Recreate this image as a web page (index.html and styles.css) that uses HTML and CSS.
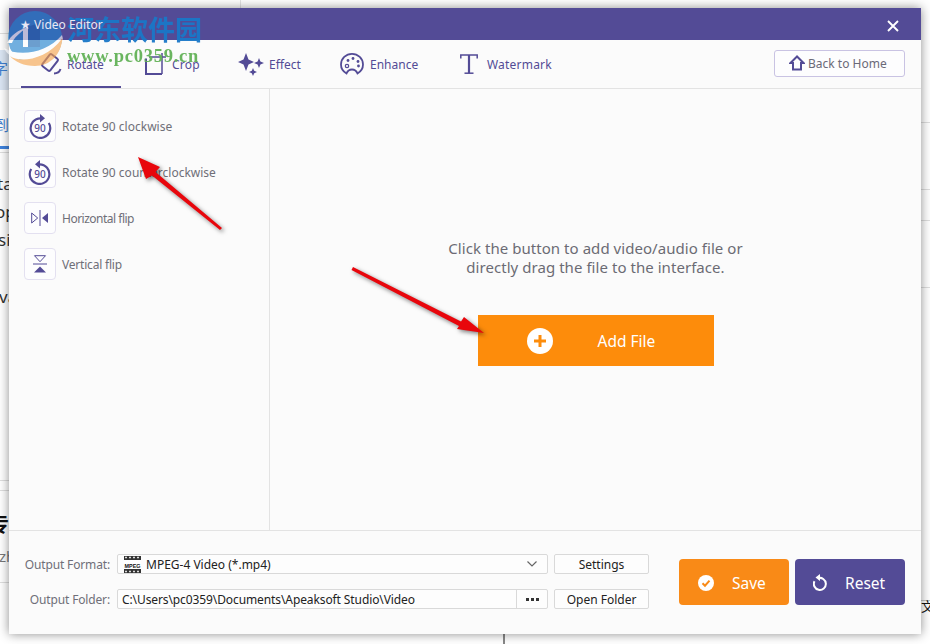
FILE: index.html
```html
<!DOCTYPE html>
<html lang="en">
<head>
<meta charset="utf-8">
<title>Video Editor</title>
<link rel="stylesheet" href="styles.css">
</head>
<body>
<div class="desktop">
  <i class="bg-line bl-a"></i><i class="bg-band"></i><i class="bg-tab"></i>
  <i class="bg-line bl-b"></i><i class="bg-line bl-e"></i><i class="bg-line bl-c"></i><i class="bg-line bl-d"></i>
  <i class="bg-line br-a"></i><i class="bg-line br-b"></i><i class="bg-line br-c"></i><i class="bg-line br-d"></i><i class="bg-line br-e"></i>
  <i class="bg-vline vl-a"></i><i class="bg-vline vl-b"></i>
  <span class="frag f-zi">字</span><span class="frag f-dao">到</span>
  <span class="frag f-t1">ta</span><span class="frag f-t2">op</span><span class="frag f-t3">si</span><span class="frag f-t4">va</span>
  <span class="frag f-zhuan">专</span><span class="frag f-zh">zh</span><span class="frag f-wen">文</span>

  <div class="window">
    <header class="titlebar">
      <span class="title">★ Video Editor</span>
      <svg class="close" viewBox="0 0 12 12" width="12" height="12"><path d="M1 1l10 10M11 1L1 11" stroke="#fff" stroke-width="1.9" fill="none"/></svg>
    </header>

    <nav class="tabs">
      <div class="tab tab-active">
        <svg class="ti" width="22" height="24" viewBox="0 0 22 24" fill="none" stroke="#534b96" stroke-width="2"><rect x="5" y="3" width="10" height="15" rx="1.5" transform="rotate(38 10 10.5)"/><path d="M14 21.5c3 0 5.500-1.500 6.500-4.500" /></svg>
        <span>Rotate</span>
      </div>
      <div class="tab">
        <svg class="ti" width="22" height="24" viewBox="0 0 22 24" fill="none" stroke="#534b96" stroke-width="2"><path d="M1 6.500V22h16"/><path d="M4 5h17" stroke-width="1.500"/><path d="M17 1v21" stroke-width="1.500"/></svg>
        <span class="wide">Crop</span>
      </div>
      <div class="tab">
        <svg class="ti" width="26" height="24" viewBox="0 0 26 24" fill="#534b96"><path d="M8 1l2.500 6.500L16 10l-5.500 2.500L8 19l-2.500-6.500L0 10l5.500-2.500z"/><path d="M21 6l1.400 3.600L26 11l-3.600 1.400L21 16l-1.400-3.600L16 11l3.600-1.400z"/><path d="M15 16l1.200 2.800L19 20l-2.800 1.200L15 24l-1.200-2.800L11 20l2.800-1.200z"/></svg>
        <span>Effect</span>
      </div>
      <div class="tab tab-en">
        <svg class="ti" width="24" height="24" viewBox="0 0 24 24" fill="none" stroke="#534b96" stroke-width="1.800"><path d="M6.500 21.500C3 19.500 1 16 1 12.500 1 6.500 6 1.800 12 1.800s11 4.700 11 10.700c0 3.500-2 7-5.500 9-1-2.500-3-4-5.500-4s-4.500 1.500-5.500 4z"/><circle cx="7" cy="14" r="1.700" stroke-width="1.200"/><circle cx="8" cy="8.500" r="1.400" fill="#534b96" stroke="none"/><circle cx="13" cy="6.500" r="1.400" fill="#534b96" stroke="none"/><circle cx="18" cy="9.500" r="1.400" fill="#534b96" stroke="none"/><circle cx="18.500" cy="14" r="1.400" fill="#534b96" stroke="none"/></svg>
        <span>Enhance</span>
      </div>
      <div class="tab tab-wm">
        <svg class="ti" width="18" height="20" viewBox="0 0 18 20" fill="none" stroke="#534b96"><path d="M.8 4.500V1h16.400v3.500" stroke-width="1.500"/><path d="M9 1v18" stroke-width="2.200"/><path d="M4.500 19.200h9" stroke-width="1.500"/></svg>
        <span class="wide">Watermark</span>
      </div>
      <button class="home">
        <svg width="16" height="16" viewBox="0 0 16 16" fill="none" stroke="#534b96" stroke-width="2"><path d="M8 1.500L1.500 8H4v6.500h8V8h2.500z" stroke-linejoin="miter"/></svg>
        Back to Home
      </button>
    </nav>

    <div class="body">
      <aside class="sidebar">
        <div class="action">
          <span class="abox"><svg width="26" height="26" viewBox="0 0 26 26" fill="none" stroke="#534b96" stroke-width="2.200"><path d="M13.500 5.300A9.800 9.800 0 1 0 21.800 10"/><path d="M13 1l5 4.300-5 4.300z" fill="#534b96" stroke="none"/><text x="13" y="18.500" text-anchor="middle" class="n90">90</text></svg></span>
          <span>Rotate 90 clockwise</span>
        </div>
        <div class="action">
          <span class="abox"><svg width="26" height="26" viewBox="0 0 26 26" fill="none" stroke="#534b96" stroke-width="2.200"><path d="M12.500 5.300A9.800 9.800 0 1 1 4.200 10"/><path d="M13 1L8 5.300l5 4.300z" fill="#534b96" stroke="none"/><text x="13" y="18.500" text-anchor="middle" class="n90">90</text></svg></span>
          <span>Rotate 90 counterclockwise</span>
        </div>
        <div class="action">
          <span class="abox"><svg width="18" height="16" viewBox="0 0 18 16"><path d="M.7 3v10l6-5z" fill="none" stroke="#534b96"/><path d="M9 0v16" stroke="#534b96"/><path d="M17 3v10l-6-5z" fill="#534b96"/></svg></span>
          <span class="tight">Horizontal flip</span>
        </div>
        <div class="action">
          <span class="abox"><svg width="14" height="18" viewBox="0 0 14 18"><path d="M1.500.7h11l-5.500 6z" fill="none" stroke="#534b96"/><path d="M0 9h14" stroke="#534b96"/><path d="M1 17.500h12l-6-6z" fill="#534b96"/></svg></span>
          <span class="tighter">Vertical flip</span>
        </div>
      </aside>
      <main class="stage">
        <p class="hint">Click the button to add video/audio file or<br>directly drag the file to the interface.</p>
        <button class="add">
          <svg class="plus" width="26" height="26" viewBox="0 0 26 26"><circle cx="13" cy="13" r="13" fill="#fff"/><path d="M13 7v12M7 13h12" stroke="#fd8c0b" stroke-width="3"/></svg>
          <span>Add File</span>
        </button>
      </main>
    </div>

    <footer class="footer">
      <div class="fields">
        <div class="frow">
          <label class="flabel">Output Format:</label>
          <div class="select">
            <svg width="17" height="17" viewBox="0 0 17 17"><rect width="17" height="17" fill="#333"/><path d="M1 1.500h2M5 1.500h2M9 1.500h2M13 1.500h2M1 15.500h2M5 15.500h2M9 15.500h2M13 15.500h2" stroke="#ddd" stroke-width="1.500"/><rect y="4" width="17" height="9" fill="#fff"/><text x="8.500" y="11.500" text-anchor="middle" textLength="16" lengthAdjust="spacingAndGlyphs" class="mpeg">MPEG</text></svg>
            <span class="sval">MPEG-4 Video (*.mp4)</span>
            <svg class="chev" width="10" height="6" viewBox="0 0 10 6" fill="none" stroke="#666" stroke-width="1.200"><path d="M.5.500L5 5 9.500.5"/></svg>
          </div>
          <button class="btn">Settings</button>
        </div>
        <div class="frow">
          <label class="flabel">Output Folder:</label>
          <div class="input">
            <span class="path">C:\Users\pc0359\Documents\Apeaksoft Studio\Video</span>
            <span class="dots"><i></i><i></i><i></i></span>
          </div>
          <button class="btn">Open Folder</button>
        </div>
      </div>
      <div class="actions">
        <button class="big save">
          <svg width="16" height="16" viewBox="0 0 16 16"><circle cx="8" cy="8" r="8" fill="#fff"/><path d="M4.500 8.200l2.500 2.500 4.500-5" stroke="#f98a17" stroke-width="2" fill="none"/></svg>
          <span>Save</span>
        </button>
        <button class="big reset">
          <svg width="14" height="17" viewBox="0 0 14 17" fill="none" stroke="#fff" stroke-width="2"><path d="M5 4.200a6 6 0 1 1-3.500 3"/><path d="M7 0v7L2.500 3.500z" fill="#fff" stroke="none"/></svg>
          <span>Reset</span>
        </button>
      </div>
    </footer>
  </div>

  <div class="wm-logo">
    <svg width="60" height="58" viewBox="0 0 60 58">
      <circle cx="31" cy="27" r="27" fill="#1e82cf"/>
      <path d="M24 36V15.500L36 12v24z" fill="#1566b4"/>
      <path d="M19 36V19l5-3.500V36z" fill="#fff"/>
      <path d="M3 32C7 24 14 19 24 16 15 22 10 27 8 32z" fill="#fff"/>
      <path d="M0 37C14 46 42 43 58 24l1 4C48 42 34 50 20 49 10 48 3 44 0 37z" fill="#fff"/>
      <path d="M6 45C14 52 42 50 58.500 27 57 44 46 55 31 55 20 55 11 51 6 45z" fill="#f6a34a"/>
    </svg>
  </div>
  <div class="wm-cn">河东软件园</div>
  <div class="wm-url">www.pc0359.cn</div>

  <svg class="arrows" width="930" height="644" viewBox="0 0 930 644">
    <path d="M138 157L160 167 155.500 172 222 228 220 230 152 175.500 146 179z" fill="#e8060c"/>
    <path d="M484 333L464 317 461 321.500 353 267 351.500 270 459 326 457 329z" fill="#e8060c"/>
  </svg>
</div>
</body>
</html>
```
FILE: styles.css
```css
* { box-sizing: border-box; }
html, body { margin: 0; padding: 0; }
body { width: 930px; height: 644px; overflow: hidden; background: #fff; font-family: "Noto Sans", "Open Sans", sans-serif; }
button { font-family: inherit; cursor: default; }

.desktop { position: relative; width: 930px; height: 644px; overflow: hidden; background: #fff; }

/* page behind the window */
.bg-line { position: absolute; height: 1px; background: #dedede; }
.bg-vline { position: absolute; width: 1px; background: #e4e4e4; }
.bl-a { left: 0; top: 33px; width: 10px; }
.bg-band { position: absolute; left: 0; top: 50px; width: 10px; height: 40px; background: #dbe6f4; }
.bg-tab { position: absolute; left: 0; top: 146px; width: 10px; height: 3px; background: #3f83dd; }
.bl-b { left: 0; top: 152px; width: 10px; }
.bl-e { left: 0; top: 480px; width: 10px; }
.bl-c { left: 0; top: 490px; width: 10px; }
.bl-d { left: 0; top: 582px; width: 10px; }
.br-a { left: 921px; top: 122px; width: 9px; }
.br-b { left: 921px; top: 189px; width: 9px; }
.br-c { left: 921px; top: 220px; width: 9px; }
.br-d { left: 921px; top: 287px; width: 9px; }
.br-e { left: 921px; top: 600px; width: 9px; background: #c4c4c4; }
.vl-a { left: 240px; top: 0; height: 8px; }
.vl-b { left: 503px; top: 634px; height: 10px; width: 2px; background: #888; }
.frag { position: absolute; font-size: 17px; line-height: 20px; color: #333; left: 0; white-space: nowrap; }
.f-zi { top: 58px; left: -7px; font: 15px/20px "Noto Sans CJK SC", sans-serif; color: #3f7fd0; }
.f-dao { top: 115px; left: -6px; font: 15px/20px "Noto Sans CJK SC", sans-serif; color: #3f7fd0; }
.f-t1 { top: 174px; left: -3px; }
.f-t2 { top: 202px; left: -5px; }
.f-t3 { top: 230px; left: -2px; }
.f-t4 { top: 287px; left: -1px; }
.f-zhuan { top: 512px; left: -11px; font: 700 20px/24px "Noto Sans CJK SC", sans-serif; color: #111; }
.f-zh { top: 546px; left: -1px; color: #777; font-size: 15px; }
.f-wen { top: 597px; left: 921px; font: 13px/18px "Noto Sans CJK SC", sans-serif; color: #111; }

/* window */
.window { position: absolute; left: 9px; top: 8px; width: 912px; height: 626px; display: flex; flex-direction: column; background: #fbfbfb; box-shadow: 0 0 10px rgba(0,0,0,.45); }
.titlebar { height: 32px; flex: none; background: #534b96; display: flex; align-items: center; justify-content: space-between; padding: 1px 22px 0 11px; color: #fff; }
.title { font-size: 12px; line-height: 31px; color: #e9e8f4; position: relative; z-index: 5; }
.close { margin-top: 3px; }

.tabs { height: 49px; flex: none; border-bottom: 1px solid #e3e3e3; padding: 0 16px 0 12px; display: grid; grid-template-columns: 124px 93px 102px 120px 1fr auto; align-items: center; position: relative; }
.tab { display: flex; align-items: center; gap: 5px; height: 48px; font-size: 12px; color: #534b96; }
.tab-active { width: 100px; padding: 2px 0 0 19px; border-bottom: 2px solid #534b96; }
.tab-en { gap: 6px; }
.tab-wm { gap: 9px; }
.tab .ti { flex: none; }
.wide { letter-spacing: .2px; }
.home { width: 131px; height: 27px; margin-bottom: 2px; background: #fdfdfe; border: 1px solid #c9c3e3; border-radius: 3px; display: flex; align-items: center; gap: 3px; padding: 0 0 0 14px; font-size: 12px; color: #6b6a78; }

.body { flex: 1; display: flex; min-height: 0; }
.sidebar { width: 261px; flex: none; border-right: 1px solid #e3e3e3; padding: 21px 0 0 15px; display: flex; flex-direction: column; gap: 14px; }
.action { display: flex; align-items: center; gap: 6px; font-size: 12px; color: #6f6f78; height: 32px; }
.tight { letter-spacing: -.5px; }
.tighter { letter-spacing: -.2px; }
.abox { width: 32px; height: 32px; flex: none; border: 1px solid #e3e0f0; border-radius: 4px; background: #fdfdfe; display: flex; align-items: center; justify-content: center; }
.n90 { font: 500 10px "Noto Sans", sans-serif; fill: #534b96; stroke: none; }
.stage { flex: 1; display: flex; flex-direction: column; align-items: center; padding-top: 150px; }
.hint { margin: 0; font-size: 15px; line-height: 19px; letter-spacing: .05px; text-align: center; color: #6b6b74; }
.add { margin-top: 38px; width: 236px; height: 51px; border: 0; background: #fd8c0b; color: #fff; font-size: 15.500px; display: flex; align-items: center; padding: 0 0 0 49px; gap: 45px; }
.plus { flex: none; }

.footer { height: 104px; flex: none; border-top: 1px solid #e3e3e3; display: flex; padding: 23px 16px 0 0; justify-content: space-between; }
.fields { display: flex; flex-direction: column; gap: 15px; }
.frow { display: flex; align-items: center; height: 20px; }
.flabel { width: 101px; text-align: right; font-size: 12px; letter-spacing: -.15px; color: #6f6f78; white-space: nowrap; }
.select, .input { width: 431px; height: 20px; background: #fdfdfd; border: 1px solid #d9d9d9; border-radius: 2px; display: flex; align-items: center; font-size: 12px; color: #222; margin-left: 7px; margin-right: 6px; }
.select { padding: 0 10px 0 6px; gap: 5px; }
.sval { flex: 1; }
.input { padding-left: 4px; }
.path { flex: 1; white-space: nowrap; overflow: hidden; letter-spacing: -.1px; }
.dots { width: 31px; height: 18px; border-left: 1px solid #d9d9d9; display: flex; align-items: center; justify-content: center; gap: 2px; }
.dots i { width: 3px; height: 3px; background: #333; }
.btn { width: 95px; height: 20px; padding: 0; background: #fdfdfd; border: 1px solid #d9d9d9; border-radius: 2px; font-size: 12px; color: #222; }
.actions { display: flex; gap: 6px; margin-top: 5px; }
.big { width: 110px; height: 46px; border: 0; border-radius: 4px; color: #fff; font-size: 15.500px; display: flex; align-items: center; padding: 1px 0 0 19px; gap: 18px; }
.save { background: #f98a17; }
.reset { background: #534b96; padding-left: 18px; gap: 18px; }
.mpeg { font: 700 6px "Liberation Sans", sans-serif; fill: #111; }

/* overlays */
.wm-logo { position: absolute; left: 4px; top: 11px; opacity: .62; pointer-events: none; }
.wm-cn { position: absolute; left: 67px; top: 12px; font: 700 27px/34px "Noto Sans CJK SC", sans-serif; color: #1a78c8; opacity: .95; white-space: nowrap; }
.wm-url { position: absolute; left: 67px; top: 45px; font: 700 18.500px/22px "Liberation Serif", serif; letter-spacing: .75px; color: #63b257; opacity: .95; white-space: nowrap; }
.arrows { position: absolute; left: 0; top: 0; filter: drop-shadow(2px 2px 2px rgba(0,0,0,.5)); pointer-events: none; }
```
